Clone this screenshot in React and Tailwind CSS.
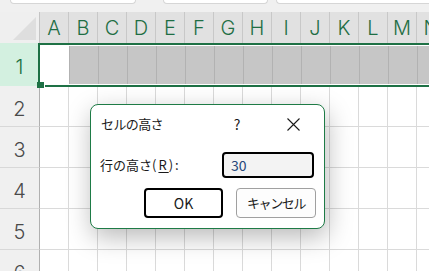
import React from "react";

const COLS = ["A", "B", "C", "D", "E", "F", "G", "H", "I", "J", "K", "L", "M", "N"];
const ROWS = [2, 3, 4, 5, 6];

export default function App() {
  return (
    <div
      className="relative w-[429px] h-[271px] overflow-hidden bg-white"
      style={{ fontFamily: "Inter, 'Noto Sans', sans-serif" }}
    >
      {/* top strip */}
      <div className="h-[12px] bg-[#f0f0f0] flex items-start">
        <div className="ml-[10px] w-[126px] h-[4px] bg-white rounded-b-[5px] border border-t-0 border-[#d6d6d6]" />
        <div className="ml-[27px] w-[105px] h-[4px] bg-white rounded-b-[5px] border border-t-0 border-[#d6d6d6]" />
        <div className="ml-[8px] flex-1 h-[4px] bg-white rounded-bl-[5px] border border-t-0 border-r-0 border-[#d6d6d6]" />
      </div>

      {/* column header */}
      <div className="flex h-[31px]">
        <div className="relative w-[40px] shrink-0 bg-[#efefef] border-r border-[#c4c4c4]">
          <svg className="absolute left-0 top-0" width="40" height="31">
            <polygon points="36,5 36,28 13,28" fill="#dedede" />
          </svg>
        </div>
        {COLS.map((c) => (
          <div
            key={c}
            className="w-[29px] shrink-0 bg-[#e1e1e1] border-r border-[#c8c8c8] flex items-center justify-center text-[20px] font-light text-[#1e6e44] leading-none pt-[1px]"
          >
            {c}
          </div>
        ))}
      </div>

      {/* row 1 */}
      <div className="flex h-[43px]">
        <div className="w-[40px] shrink-0 bg-[#d3f0e0] border-r border-[#b8b8b8] flex items-center justify-center text-[20px] font-light text-[#1e6e44] leading-none pt-[4px]">
          1
        </div>
        {COLS.map((c, i) => (
          <div
            key={c}
            className={
              i === 0
                ? "w-[29px] shrink-0 bg-white"
                : "w-[29px] shrink-0 bg-[#c6c6c6] border-l border-[#b2b2b2]"
            }
          />
        ))}
      </div>

      {/* rows 2.. */}
      {ROWS.map((r) => (
        <div key={r} className="flex h-[41px]">
          <div className="w-[40px] shrink-0 bg-[#f0f0f0] border-r border-b border-r-[#b0b0b0] border-b-[#d8d8d8] flex items-center justify-center text-[20px] font-light text-[#4a4a4a] leading-none pt-[6px]">
            {r}
          </div>
          {COLS.map((c) => (
            <div key={c} className="w-[29px] shrink-0 border-r border-b border-[#dadada]" />
          ))}
        </div>
      ))}

      {/* selection border */}
      <div className="absolute left-[38px] top-[43px] w-[420px] h-[44px] border-2 border-[#1e7145]">
        <div className="absolute inset-0 border border-white" />
      </div>
      <div className="absolute left-[37px] top-[82px] w-[7px] h-[6px] bg-[#1e7145]" />
      <div className="absolute left-[44px] top-[85px] w-[1px] h-[2px] bg-white" />

      {/* dialog */}
      <div
        className="absolute left-[90px] top-[104px] w-[235px] h-[125px] bg-white border border-[#1e7b46] rounded-[8px] shadow-[2px_8px_26px_rgba(0,0,0,0.28)] flex flex-col text-[#1a1a1a]"
        style={{ fontFamily: "'Noto Sans CJK JP', 'Noto Sans', sans-serif" }}
      >
        <div className="h-[38px] flex items-center pl-[10px] pr-[15px]">
          <span className="text-[13px] tracking-[-0.6px]">セルの高さ</span>
          <span className="ml-auto w-[16px] text-center text-[14px]">?</span>
          <span className="ml-[32px] w-[32px] flex items-center justify-center">
            <svg width="13" height="13" viewBox="0 0 13 13">
              <path d="M0.5 0.5 L12.5 12.5 M12.5 0.5 L0.5 12.5" stroke="#1a1a1a" strokeWidth="1.1" fill="none" />
            </svg>
          </span>
        </div>
        <div className="mt-[9px] flex items-center pl-[9px] pr-[10px]">
          <span className="text-[13px]">
            行の高さ
            <span className="tracking-[2px]">
              (<span className="underline underline-offset-2">R</span>):
            </span>
          </span>
          <div className="ml-auto w-[92px] h-[26px] border-2 border-black rounded-[4px] bg-[#f3f3f3] flex items-center pl-[7px] text-[14px] text-[#24467a]">
            30
          </div>
        </div>
        <div className="mt-[10px] flex justify-end gap-[13px] pr-[8px]">
          <div className="w-[79px] h-[30px] border-2 border-black rounded-[4px] flex items-center justify-center text-[14px]">
            OK
          </div>
          <div className="w-[80px] h-[30px] border border-[#a0a0a0] rounded-[4px] bg-[#fdfdfd] flex items-center justify-center text-[13px] tracking-[-1.4px]">
            キャンセル
          </div>
        </div>
      </div>
    </div>
  );
}
